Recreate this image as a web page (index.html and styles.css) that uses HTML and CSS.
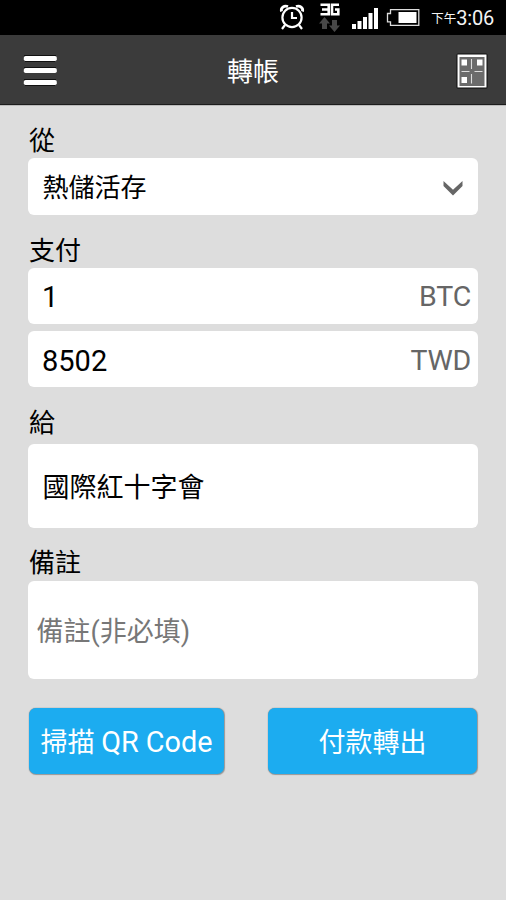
FILE: index.html
```html
<!DOCTYPE html>
<html lang="zh-Hant">
<head>
<meta charset="utf-8">
<title>轉帳</title>
<link rel="stylesheet" href="styles.css">
</head>
<body>
<div class="status">
  <svg class="status-icons" width="150" height="35" viewBox="0 0 150 35" aria-hidden="true">
    <g fill="none" stroke="#fff" stroke-width="2.2">
      <circle cx="17" cy="17.5" r="9.6"/>
      <path d="M17 12v6h5M10 25l-3 4M24 25l3 4"/>
      <path d="M6.500 11.500C5.500 8 9 5 13 6.500M27.500 11.500C28.500 8 25 5 21 6.500" stroke-width="2.800"/>
    </g>
    <g fill="none" stroke="#fff" stroke-width="2.600">
      <path d="M45.500 4.800h8.200v9.400h-8.200M47 9.500h6.700M64 4.800h-7v9.400h6.300v-4.700h-3.300"/>
    </g>
    <path fill="#484848" d="M49.500 17l5.500 6.500h-3V29h-5v-5.500h-3zM59.500 32l5.500-6.500h-3V20h-5v5.500h-3z"/>
    <path fill="#fff" d="M77 24h4v5h-4zM82.500 21h4v8h-4zM88 17h4v12h-4zM93.500 13h4v16h-4zM99 8h4v21h-4z"/>
    <path fill="none" stroke="#ddd" stroke-width="1.300" d="M115.500 9.700h28.300v15.700h-28.300v-3.600h-3v-8.300h3z"/>
    <path fill="#fff" d="M123.500 12h18v11h-18z"/>
  </svg>
  <span class="period">下午</span><span class="clock">3:06</span>
</div>
<header class="bar">
  <svg width="34" height="32" viewBox="0 0 34 32" aria-label="選單">
    <path fill="#111" d="M1 0h32v3H1zM1 12h32v3H1zM1 24h32v3H1zM2 6h30v1H2zM2 30h30v1H2z"/>
    <g fill="#fff">
      <rect x=".8" y="1" width="33" height="5" rx="1.800"/>
      <rect x=".8" y="13" width="33" height="5" rx="1.800"/>
      <rect x=".8" y="25" width="33" height="5" rx="1.800"/>
    </g>
  </svg>
  <h1 class="title">轉帳</h1>
  <svg width="32" height="36" viewBox="0 0 32 36" aria-label="QR">
    <rect x=".5" y=".5" width="31" height="35" rx="1.500" fill="#0c0c0c"/>
    <rect x="1.500" y="1.500" width="29" height="33" fill="#fff"/>
    <rect x="3.500" y="4" width="25" height="29" fill="#6b6b6b"/>
    <path fill="#fff" d="M5.500 6.500H11v6H5.500zM21 6.500h5.500v6H21zM5.500 24H11v6H5.500z"/>
    <path fill="none" stroke="#ddd" stroke-width="1.100" d="M15.500 6v10M15.500 21v9.500M5.500 18.500h8M18.500 18.500h8"/>
  </svg>
</header>
<main class="form">
  <div class="label">從</div>
  <div class="field">
    <span class="cjk">熱儲活存</span>
    <svg class="chevron" width="22" height="16" viewBox="0 0 22 16" aria-hidden="true"><path d="M1.500 0L11 8.800 20.500 0v5L11 14.500 1.500 5z" fill="#666"/></svg>
  </div>
  <div class="label label-pay">支付</div>
  <div class="field"><span class="num">1</span><span class="unit">BTC</span></div>
  <div class="field field-next"><span class="num">8502</span><span class="unit">TWD</span></div>
  <div class="label label-to">給</div>
  <div class="field field-to"><span class="cjk">國際紅十字會</span></div>
  <div class="label label-note">備註</div>
  <div class="field field-note"><span class="cjk">備註(非必填)</span></div>
  <div class="actions">
    <button class="btn btn-scan">掃描 <span class="latin">QR Code</span></button>
    <button class="btn btn-pay">付款轉出</button>
  </div>
</main>
</body>
</html>
```
FILE: styles.css
```css
* { box-sizing: border-box; }
body {
  margin: 0;
  min-height: 900px;
  background: #ddd;
  color: #000;
  font: 26px/30px Roboto, "Noto Sans CJK TC", sans-serif;
}
.status {
  display: flex;
  align-items: center;
  justify-content: flex-end;
  height: 35px;
  padding-right: 12px;
  background: #000;
  color: #f4f4f4;
}
.status-icons { width: 150px; margin-right: 6px; }
.period { font-size: 12.5px; padding-top: 3px; }
.clock { font-size: 20px; letter-spacing: -0.2px; }
.bar {
  display: flex;
  align-items: center;
  justify-content: space-between;
  height: 70px;
  padding: 2px 18px 0 23px;
  background: #3b3b3b;
  border-bottom: 1px solid #1c1c1c;
  box-shadow: 0 1px 0 #bbb;
}
.title {
  margin: 0;
  padding: 2px 7px 0 0;
  color: #fff;
  font-size: 26px;
  font-weight: 400;
}
.form { padding: 19px 28px 0; }
.label { height: 34px; padding: 2px 0 0 1px; }
.label-pay { margin-top: 19px; }
.label-to { height: 37px; margin-top: 20px; padding-top: 1px; }
.label-note { margin-top: 19px; padding-top: 1px; }
.field {
  display: flex;
  align-items: center;
  justify-content: space-between;
  height: 56px;
  padding: 0 7px 0 14px;
  background: #fff;
  border-radius: 6px;
}
.label:first-child + .field { height: 57px; }
.field-next { margin-top: 7px; }
.field-to { height: 84px; font-size: 27px; }
.field-note { height: 98px; padding-left: 8px; color: #777; font-size: 27px; }
.cjk { padding: 3px 0 0 0.5px; }
.field-to .cjk, .field-note .cjk { padding-top: 4px; }
.chevron { margin: 4px 7px 0 0; }
.num, .unit { font-size: 29px; padding-top: 2px; }
.field-next > span { padding-top: 3px; }
.unit { color: #666; font-size: 28.5px; letter-spacing: -0.2px; }
.actions { display: flex; justify-content: space-between; margin-top: 29px; padding: 0 1px; }
.btn {
  height: 66px;
  padding: 3px 0 0;
  border: 0;
  border-radius: 7px;
  background: #1cacf0;
  color: #fff;
  box-shadow: 0 0 1px #888, 0.5px 0.5px 1px #999;
  font: inherit;
  font-size: 27px;
}
.btn-scan { width: 195px; }
.latin { font-size: 28.8px; }
.btn-pay { width: 209px; }
```
